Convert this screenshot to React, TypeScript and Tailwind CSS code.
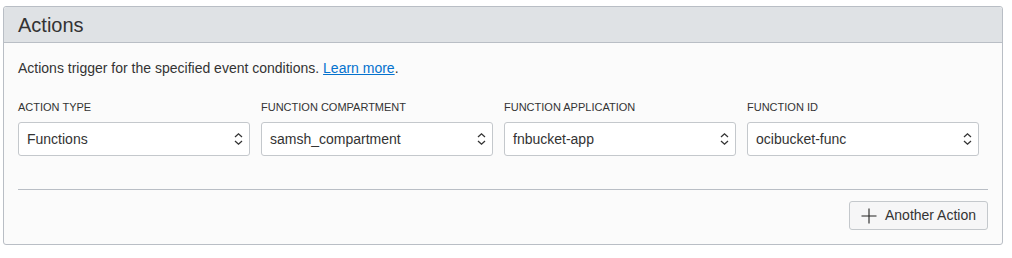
import React from "react";

const fields = [
  { label: "ACTION TYPE", value: "Functions" },
  { label: "FUNCTION COMPARTMENT", value: "samsh_compartment" },
  { label: "FUNCTION APPLICATION", value: "fnbucket-app" },
  { label: "FUNCTION ID", value: "ocibucket-func" },
];

const Chevrons = () => (
  <svg width="9" height="14" viewBox="0 0 9 14" fill="none" stroke="#333" strokeWidth="1.3">
    <path d="M1 5 L4.5 1.8 L8 5" />
    <path d="M1 9 L4.5 12.2 L8 9" />
  </svg>
);

export default function App() {
  return (
    <div className="w-[1012px] h-[258px] bg-white pt-[6px] pl-[3px] font-['Liberation_Sans',Arial,sans-serif] text-[#333]">
      <div className="w-[1000px] h-[239px] border border-[#b9bec5] rounded-[3px] bg-[#fbfbfb] flex flex-col">
        <div className="h-[36px] bg-[#dfe2e5] border-b border-[#b9bec5] px-[14px] flex items-center rounded-t-[3px]">
          <h2 className="text-[20px] leading-none text-[#333]">Actions</h2>
        </div>
        <div className="px-[14px]">
          <p className="mt-[16px] text-[14px] leading-[18px]">
            Actions trigger for the specified event conditions.{" "}
            <a className="text-[#0572ce] underline">Learn more</a>.
          </p>
          <div className="mt-[23px] flex gap-[11px]">
            {fields.map((f) => (
              <div key={f.label} className="w-[232px]">
                <div className="text-[11px] leading-[14px] text-[#333]">{f.label}</div>
                <div className="mt-[8px] h-[34px] border border-[#c4c8cc] rounded-[3px] bg-white flex items-center justify-between pl-[8px] pr-[6px]">
                  <span className="text-[14px]">{f.value}</span>
                  <Chevrons />
                </div>
              </div>
            ))}
          </div>
          <div className="mt-[33px] w-[970px] border-t border-[#b9bec5]" />
          <div className="w-[970px] flex justify-end mt-[11px]">
            <button className="h-[29px] w-[139px] border border-[#c4c8cc] rounded-[3px] bg-[#f6f6f7] flex items-center justify-center gap-[8px] text-[14px] text-[#333]">
              <svg width="16" height="16" viewBox="0 0 16 16" stroke="#222" strokeWidth="1.1">
                <path d="M8 0.5 V15.5 M0.5 8 H15.5" />
              </svg>
              <span>Another Action</span>
            </button>
          </div>
        </div>
      </div>
    </div>
  );
}
